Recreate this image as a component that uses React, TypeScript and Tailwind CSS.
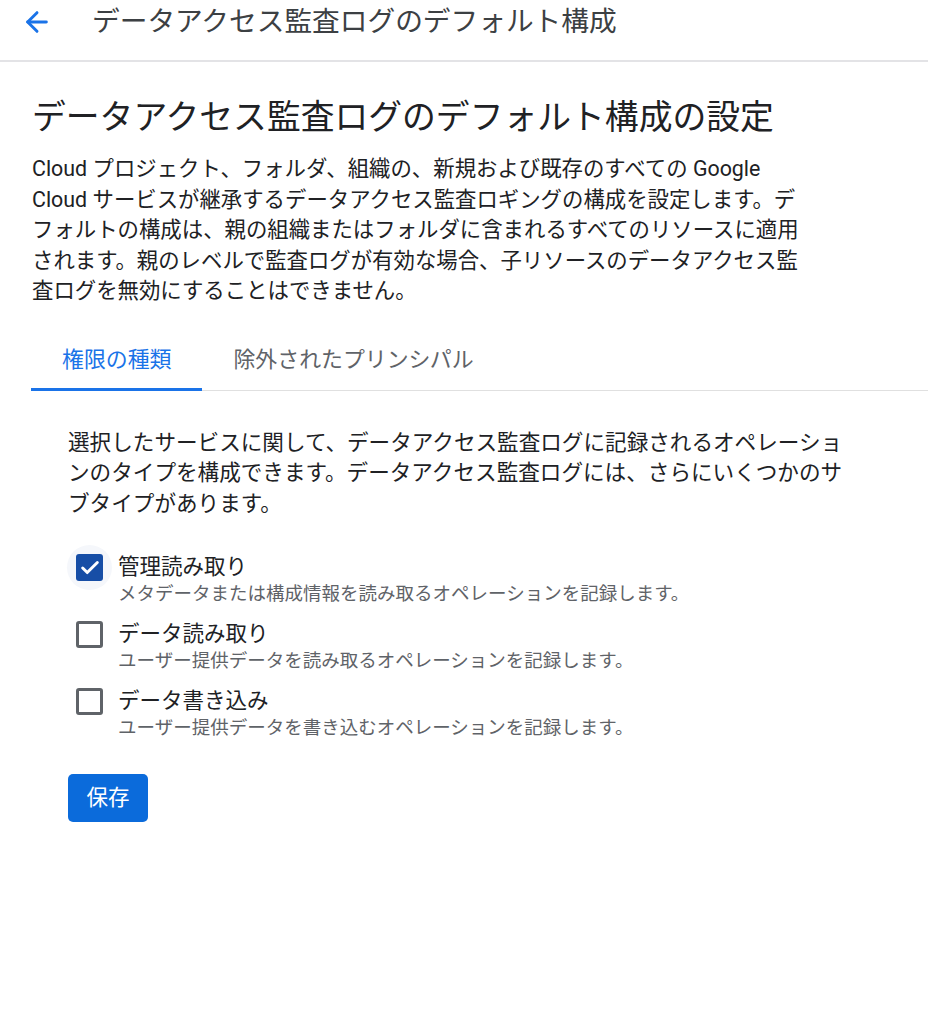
import { ArrowLeft, Check } from "lucide-react";

const font = "font-['Roboto','Noto_Sans_CJK_JP',sans-serif]";

const options = [
  {
    id: "admin",
    label: "管理読み取り",
    desc: "メタデータまたは構成情報を読み取るオペレーションを記録します。",
    checked: true,
  },
  {
    id: "read",
    label: "データ読み取り",
    desc: "ユーザー提供データを読み取るオペレーションを記録します。",
    checked: false,
  },
  {
    id: "write",
    label: "データ書き込み",
    desc: "ユーザー提供データを書き込むオペレーションを記録します。",
    checked: false,
  },
];

function Checkbox({ checked }: { checked: boolean }) {
  return (
    <div className="relative mt-px ml-2 w-[27px] h-[27px] shrink-0">
      {checked && (
        <div className="absolute -inset-[9px] rounded-full bg-[#f5f7fb]" />
      )}
      {checked ? (
        <div className="relative w-[27px] h-[27px] rounded-[3px] bg-[#174ea6] flex items-center justify-center">
          <Check className="w-[22px] h-[22px] text-white" strokeWidth={3.2} />
        </div>
      ) : (
        <div className="relative w-[27px] h-[27px] rounded-[3px] border-[3px] border-[#5f6368] bg-white" />
      )}
    </div>
  );
}

export default function App() {
  return (
    <div className={`${font} bg-white min-h-screen w-[928px] text-[#202124]`}>
      {/* Top bar */}
      <div className="h-[62px] border-b-2 border-[#e3e3e6] flex items-center pb-[16px]">
        <ArrowLeft className="ml-[21px] w-[32px] h-[32px] text-[#1a73e8]" strokeWidth={2.2} />
        <h2 className="ml-[39px] text-[27.7px] leading-[34px] text-[#3c4043]">
          データアクセス監査ログのデフォルト構成
        </h2>
      </div>

      <div className="px-[32px]">
        <h1 className="mt-[36px] text-[33.8px] leading-[40px] text-[#202124]">
          データアクセス監査ログのデフォルト構成の設定
        </h1>
        <p className="mt-[16px] w-[784px] text-[21.4px] leading-[30.5px] text-[#202124]">
          Cloud プロジェクト、フォルダ、組織の、新規および既存のすべての Google Cloud サービスが継承するデータアクセス監査ロギングの構成を設定します。デフォルトの構成は、親の組織またはフォルダに含まれるすべてのリソースに適用されます。親のレベルで監査ログが有効な場合、子リソースのデータアクセス監査ログを無効にすることはできません。
        </p>

        {/* Tabs */}
        <div className="mt-[26px] -mr-[32px] flex border-b border-[#e0e0e0]">
          <div className="px-[31px] pt-[12px] pb-[12px] -mb-px border-b-[3px] border-[#1a73e8] text-[21.9px] leading-[30px] text-[#1a73e8] ml-[-1px]">
            権限の種類
          </div>
          <div className="px-[31px] pt-[12px] pb-[15px] text-[21.9px] leading-[30px] text-[#5f6368]">
            除外されたプリンシパル
          </div>
        </div>

        {/* Tab panel */}
        <div className="pl-[36px]">
          <p className="mt-[37px] w-[800px] text-[21.6px] leading-[30.5px] text-[#202124]">
            選択したサービスに関して、データアクセス監査ログに記録されるオペレーショ<br />
            ンのタイプを構成できます。データアクセス監査ログには、さらにいくつかのサ<br />
            ブタイプがあります。
          </p>

          <div className="mt-[34px] flex flex-col gap-[13px]">
            {options.map((o) => (
              <div key={o.id} className="flex gap-[15px]">
                <Checkbox checked={o.checked} />
                <div>
                  <div className="text-[21.5px] leading-[28px] text-[#202124]">{o.label}</div>
                  <div className="text-[18.5px] leading-[26px] text-[#5f6368]">{o.desc}</div>
                </div>
              </div>
            ))}
          </div>

          <button className="mt-[33px] w-[80px] h-[48px] rounded-[5px] bg-[#0b6bdb] text-white text-[21.5px] leading-[28px]">
            保存
          </button>
        </div>
      </div>
    </div>
  );
}
